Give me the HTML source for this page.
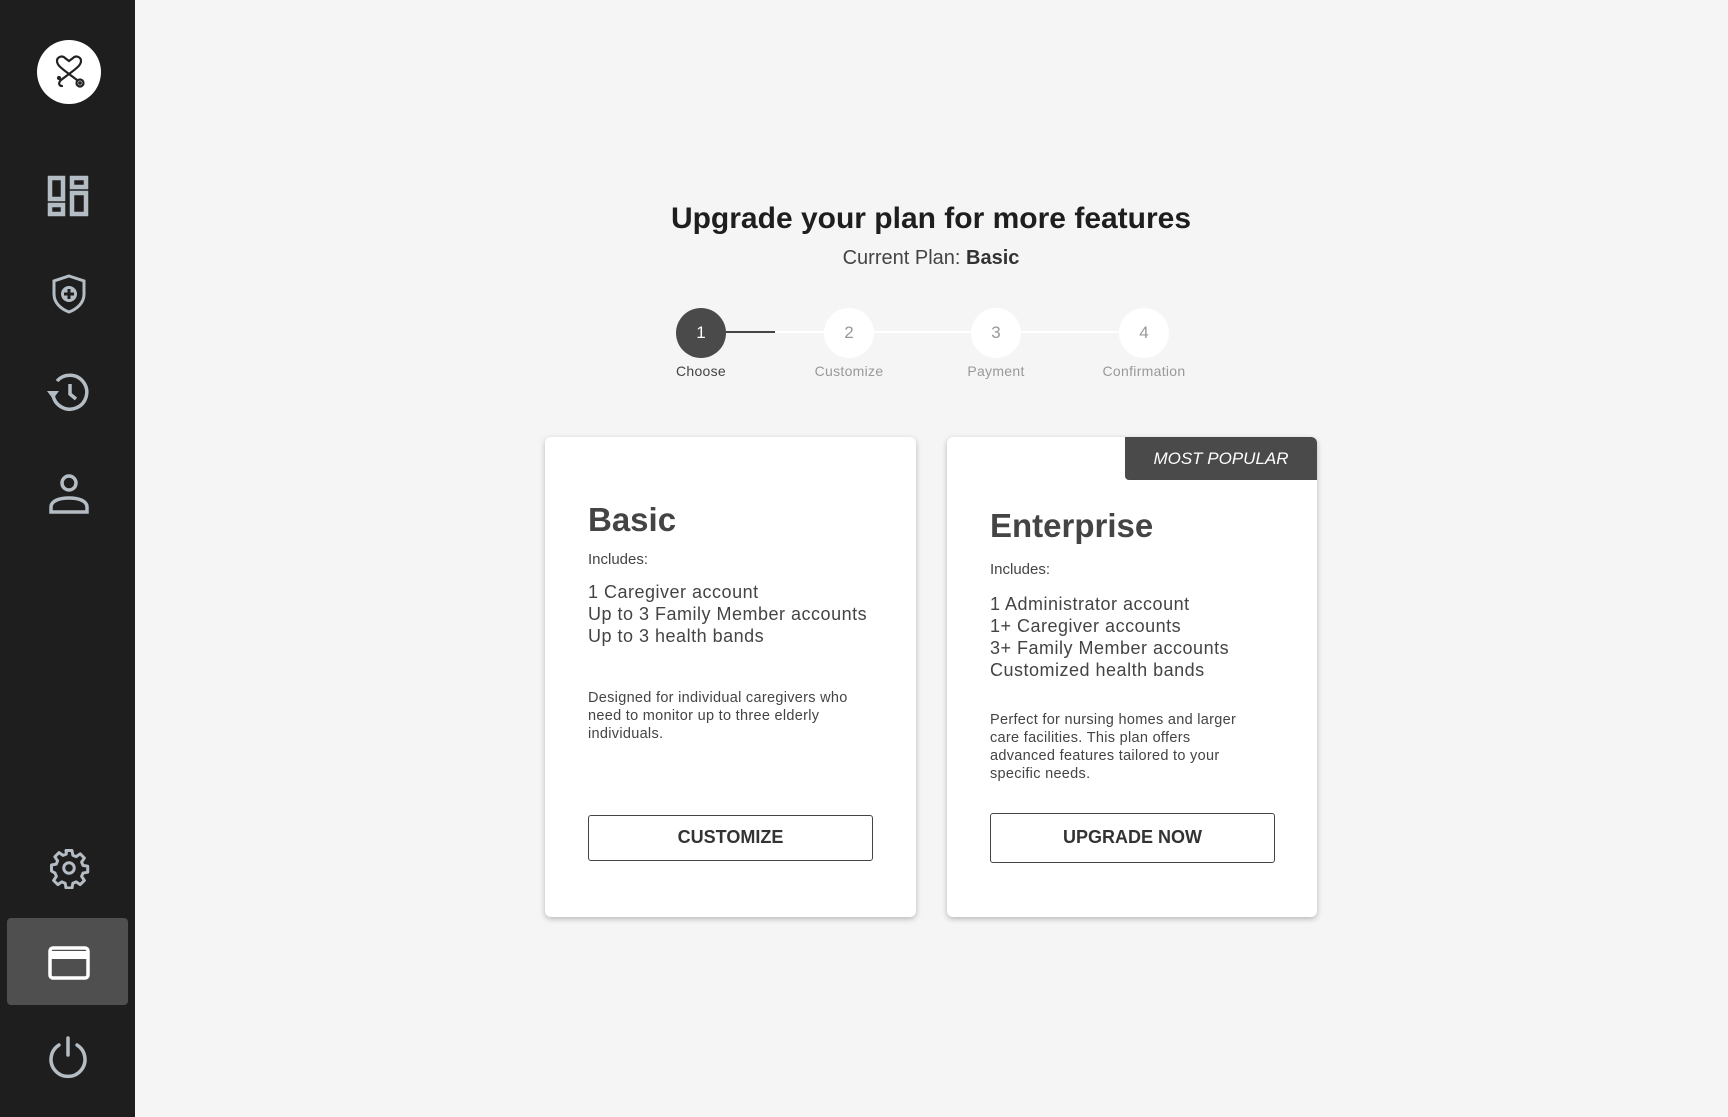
<!DOCTYPE html>
<html><head><meta charset="utf-8"><style>
*{margin:0;padding:0;box-sizing:border-box}
body{width:1728px;height:1117px;background:#f5f5f5;font-family:"Liberation Sans",sans-serif;position:relative;overflow:hidden;color:#222}
.side{position:absolute;left:0;top:0;width:135px;height:1117px;background:#1e1e1e}
.ic{position:absolute}
.abs{position:absolute}
.card{position:absolute;background:#fff;border-radius:6px;box-shadow:0 2px 6px rgba(0,0,0,.25)}
.t{position:absolute;white-space:nowrap}
.btn{position:absolute;border:1.5px solid #444;border-radius:3px;text-align:center;font-weight:bold;font-size:18px;color:#333}
.step{position:absolute;width:50px;height:50px;border-radius:50%;background:#fff;color:#999;font-size:17px;text-align:center;line-height:50px}
.lbl{position:absolute;font-size:14px;color:#999;width:120px;text-align:center;letter-spacing:.3px}
.li{letter-spacing:.5px}
.ds{letter-spacing:.3px}
</style></head><body>
<div class="side">
<div class="abs" style="left:37px;top:40px;width:64px;height:64px;border-radius:50%;background:#fff"></div>
<svg class="ic" style="left:49px;top:52px" width="40" height="40" viewBox="0 0 40 40" fill="none" stroke="#222" stroke-width="2.2" stroke-linecap="round">
<path d="M20 22 C12 16 8 13 8 9 C8 5 13 3 16 6 L20 9 L24 6 C27 3 32 5 32 9 C32 13 28 16 20 22"/>
<path d="M20 22 L28 28 M20 22 L12 28 C9 31 10 34 13 34"/>
<circle cx="31" cy="31" r="3.5"/><circle cx="31" cy="31" r=".8"/><circle cx="10" cy="26" r="1"/>
</svg>
<svg class="ic" style="left:47px;top:175px" width="42" height="42" viewBox="0 0 42 42" fill="none" stroke="#b4bcc4" stroke-width="4.5">
<rect x="3" y="3" width="13" height="21"/><rect x="25" y="3" width="14" height="9"/><rect x="3" y="30" width="13" height="9"/><rect x="25" y="18" width="14" height="21"/>
</svg>
<svg class="ic" style="left:50px;top:274px" width="38" height="40" viewBox="0 0 38 40" fill="none" stroke="#b4bcc4" stroke-width="3">
<path d="M19 2 L34 7 V20 C34 29 27 35 19 38 C11 35 4 29 4 20 V7 Z"/>
<circle cx="19" cy="20" r="8" fill="#b4bcc4" stroke="none"/>
<path d="M19 15 V25 M14 20 H24" stroke="#1e1e1e" stroke-width="3"/>
</svg>
<svg class="ic" style="left:45px;top:371px" width="46" height="44" viewBox="0 0 46 44" fill="none" stroke="#b4bcc4" stroke-width="3.5">
<path d="M8 24 A17 17 0 1 0 12 10"/><path d="M2 20 L8 28 L14 20 Z" fill="#b4bcc4" stroke="none"/>
<path d="M25 13 V23 L31 28"/>
</svg>
<svg class="ic" style="left:48px;top:473px" width="42" height="42" viewBox="0 0 42 42" fill="none" stroke="#b4bcc4" stroke-width="3.5">
<circle cx="21" cy="10" r="7"/><path d="M3 39 V34 C3 28 11 25 21 25 C31 25 39 28 39 34 V39 Z"/>
</svg>
<svg class="ic" style="left:48px;top:847px" width="42" height="42" viewBox="0 0 24 24" fill="none" stroke="#b4bcc4" stroke-width="1.7" stroke-linejoin="round">
<circle cx="12" cy="12" r="3"/>
<path d="M10.3 2h3.4l.5 2.7 1.9.8 2.3-1.6 2.4 2.4-1.6 2.3.8 1.9 2.7.5v3.4l-2.7.5-.8 1.9 1.6 2.3-2.4 2.4-2.3-1.6-1.9.8-.5 2.7h-3.4l-.5-2.7-1.9-.8-2.3 1.6-2.4-2.4 1.6-2.3-.8-1.9L2 13.7v-3.4l2.7-.5.8-1.9-1.6-2.3 2.4-2.4 2.3 1.6 1.9-.8z"/>
</svg>
<div class="abs" style="left:7px;top:918px;width:121px;height:87px;border-radius:4px;background:#4f4f4f"></div>
<svg class="ic" style="left:48px;top:946px" width="42" height="34" viewBox="0 0 42 34" fill="none" stroke="#fff" stroke-width="3.5">
<rect x="2" y="2" width="38" height="30" rx="3"/><rect x="2" y="5" width="38" height="8" fill="#fff" stroke="none"/>
</svg>
<svg class="ic" style="left:47px;top:1035px" width="42" height="44" viewBox="0 0 42 44" fill="none" stroke="#b4bcc4" stroke-width="3.5" stroke-linecap="round">
<path d="M21 3 V20"/><path d="M12 10 A17 17 0 1 0 30 10"/>
</svg>
</div>

<div class="t" style="left:531px;width:800px;text-align:center;top:202px;font-size:30px;font-weight:bold;color:#1e1e1e">Upgrade your plan for more features</div>
<div class="t" style="left:531px;width:800px;text-align:center;top:247px;font-size:20px;color:#444">Current Plan: <b style="color:#333">Basic</b></div>

<div class="abs" style="left:701px;top:331px;width:443px;height:2px;background:#fff"></div>
<div class="abs" style="left:701px;top:331px;width:74px;height:2px;background:#444"></div>
<div class="step" style="left:676px;top:308px;background:#4a4a4a;color:#fff">1</div>
<div class="step" style="left:824px;top:308px">2</div>
<div class="step" style="left:971px;top:308px">3</div>
<div class="step" style="left:1119px;top:308px">4</div>
<div class="lbl" style="left:641px;top:363px;color:#444">Choose</div>
<div class="lbl" style="left:789px;top:363px">Customize</div>
<div class="lbl" style="left:936px;top:363px">Payment</div>
<div class="lbl" style="left:1084px;top:363px">Confirmation</div>

<div class="card" style="left:545px;top:437px;width:371px;height:480px">
<div class="t" style="left:43px;top:64px;font-size:33px;font-weight:bold;color:#444">Basic</div>
<div class="t" style="left:43px;top:114px;font-size:15px;color:#444">Includes:</div>
<div class="t li" style="left:43px;top:144px;font-size:18px;line-height:22px;color:#444">1 Caregiver account<br>Up to 3 Family Member accounts<br>Up to 3 health bands</div>
<div class="t ds" style="left:43px;top:252px;font-size:14.5px;line-height:18px;color:#444">Designed for individual caregivers who<br>need to monitor up to three elderly<br>individuals.</div>
<div class="btn" style="left:43px;top:378px;width:285px;height:46px;line-height:43px">CUSTOMIZE</div>
</div>

<div class="card" style="left:947px;top:437px;width:370px;height:480px">
<div class="abs" style="left:178px;top:0;width:192px;height:43px;background:#4a4a4a;border-radius:0 6px 0 4px;color:#fff;font-style:italic;font-size:17px;text-align:center;line-height:43px">MOST POPULAR</div>
<div class="t" style="left:43px;top:70px;font-size:33px;font-weight:bold;color:#444">Enterprise</div>
<div class="t" style="left:43px;top:124px;font-size:15px;color:#444">Includes:</div>
<div class="t li" style="left:43px;top:156px;font-size:18px;line-height:22px;color:#444">1 Administrator account<br>1+ Caregiver accounts<br>3+ Family Member accounts<br>Customized health bands</div>
<div class="t ds" style="left:43px;top:274px;font-size:14.5px;line-height:18px;color:#444">Perfect for nursing homes and larger<br>care facilities. This plan offers<br>advanced features tailored to your<br>specific needs.</div>
<div class="btn" style="left:43px;top:376px;width:285px;height:50px;line-height:47px">UPGRADE NOW</div>
</div>
</body></html>
